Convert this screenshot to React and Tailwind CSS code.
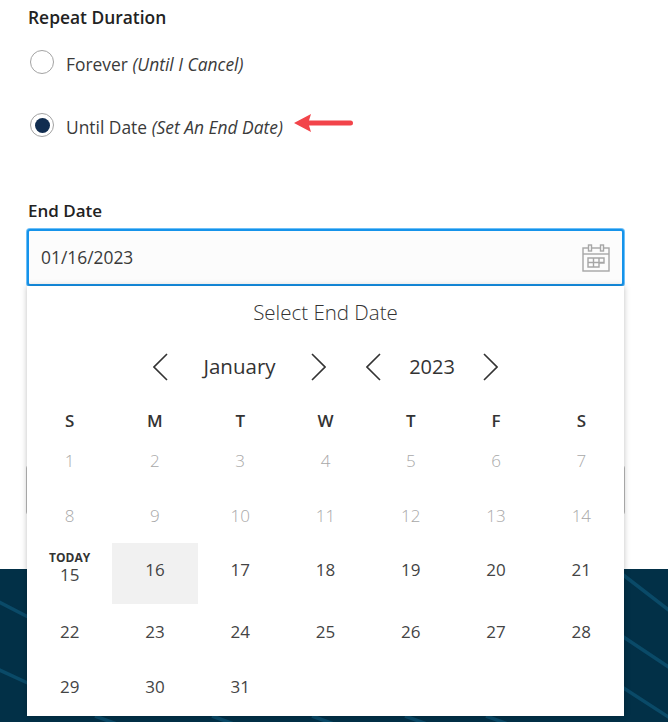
import React from "react";

const Chevron = ({ dir }) => (
  <svg width="15" height="28" viewBox="0 0 15 28" fill="none" stroke="#333" strokeWidth="1.6" aria-hidden="true">
    <polyline points={dir === "left" ? "14,1 1,14 14,27" : "1,1 14,14 1,27"} />
  </svg>
);

const Radio = ({ checked, children, note, className }) => (
  <label className={`flex h-6 items-center ${className}`}>
    <span className="flex h-6 w-6 items-center justify-center rounded-full border-[1.5px] border-[#a3a3a3] bg-white">
      {checked && <span className="h-[15px] w-[15px] rounded-full bg-[#112d50]" />}
    </span>
    <span className="ml-[12px] pt-[4px] text-[17.4px] leading-6 text-[#3a3a3a]">
      {children} <em className="italic">{note}</em>
    </span>
  </label>
);

const days = ["S", "M", "T", "W", "T", "F", "S"];
const disabledRows = [
  [1, 2, 3, 4, 5, 6, 7],
  [8, 9, 10, 11, 12, 13, 14],
];

const Cell = ({ children, className = "" }) => (
  <div className={`flex items-center justify-center text-[17px] ${className}`}>{children}</div>
);

export default function App() {
  return (
    <div className="relative h-[722px] w-[668px] overflow-hidden bg-white font-['Open_Sans',sans-serif]">
      <div className="px-[28px] pt-[7px]">
        <div className="text-[17.4px] leading-5 font-semibold text-[#222]">Repeat Duration</div>
        <Radio note="(Until I Cancel)" className="mt-[23px] ml-[2px]">Forever</Radio>
        <Radio checked note="(Set An End Date)" className="mt-[39px] ml-[2px]">Until Date</Radio>
        <div className="mt-[64px] text-[17px] leading-5 font-semibold text-[#222]">End Date</div>
      </div>

      <div className="mx-[27px] mt-[8px] flex h-[57px] w-[597px] items-center justify-between rounded-[3px] border-2 border-[#1593ea] bg-[#fcfcfc] pr-[12px] pl-[12px] text-[17.4px] text-[#3a3a3a] shadow-[0_0_0_1px_rgba(60,170,245,0.75)]">
        <span>01/16/2023</span>
        <svg width="28" height="28" viewBox="0 0 28 28" fill="none" stroke="#a6a6a6" strokeWidth="1.4" aria-hidden="true">
          <rect x="1" y="4" width="26" height="23" />
          <line x1="1" y1="10" x2="27" y2="10" />
          <rect x="6.500" y="1" width="3" height="6" fill="#fcfcfc" />
          <rect x="18.500" y="1" width="3" height="6" fill="#fcfcfc" />
          <path d="M6 14h16v5h-5v4H6zM6 18.500h16M11.500 14v9M17 14v9" />
        </svg>
      </div>

      <div className="mx-[26px] mt-[179px] h-[50px] w-[599px] rounded-[3px] border border-[#bbb]" />

      <div className="relative mt-[54px] h-[153px] bg-[#023047]">
        <svg className="h-full w-full" viewBox="0 0 668 153" fill="none" stroke="#0a4a68" strokeWidth="3.500" aria-hidden="true">
          <path d="M-5 31 32 50M-5 99 32 116M622 5 670 42M622 67 670 99M622 118 670 149" />
          <path d="M95 147 125 158M212 147 242 158M312 147 342 158M405 147 435 158M486 147 516 158" />
        </svg>
      </div>

      <div className="absolute top-[286px] left-[27px] h-[430px] w-[597px] bg-white shadow-[0_0_6px_rgba(0,0,0,0.25)]">
        <div className="pt-[12px] text-center text-[20.500px] leading-[28px] font-light text-[#333]">Select End Date</div>
        <div className="mt-[27px] flex items-center justify-center text-[#333]">
          <Chevron dir="left" />
          <span className="w-[143px] -translate-y-px text-center text-[20.500px] leading-7 font-medium">January</span>
          <Chevron dir="right" />
          <span className="w-[40px]" />
          <Chevron dir="left" />
          <span className="w-[102px] text-center text-[20px] leading-7 font-medium">2023</span>
          <Chevron dir="right" />
        </div>
        <div className="mt-[9px] grid grid-cols-7">
          {days.map((d, i) => (
            <Cell key={i} className="h-[43px] pt-[18px] font-semibold text-[#333]">{d}</Cell>
          ))}
          {disabledRows.flat().map((d) => (
            <Cell key={d} className="h-[55px] font-light text-[#a8a8a8]">{d}</Cell>
          ))}
          <div className="flex h-[61px] flex-col items-center justify-center pb-[12px] text-[#444]">
            <span className="text-xs leading-[14px] font-bold text-[#333]">TODAY</span>
            <span className="text-[17px] leading-5">15</span>
          </div>
          <Cell className="h-[61px] bg-[#f1f1f1] pb-[8px] text-[#444]">16</Cell>
          {[17, 18, 19, 20, 21].map((d) => (
            <Cell key={d} className="h-[61px] pb-[8px] text-[#444]">{d}</Cell>
          ))}
          {[22, 23, 24, 25, 26, 27, 28, 29, 30, 31].map((d) => (
            <Cell key={d} className="h-[55px] text-[#444]">{d}</Cell>
          ))}
        </div>
      </div>

      <svg className="absolute top-[112px] left-[292px]" width="64" height="22" viewBox="0 0 64 22" aria-hidden="true">
        <path d="M2 11 19 2 17 8.500H58.500a2.500 2.500 0 0 1 0 5H17L19 20z" fill="#f2444a" />
      </svg>
    </div>
  );
}
